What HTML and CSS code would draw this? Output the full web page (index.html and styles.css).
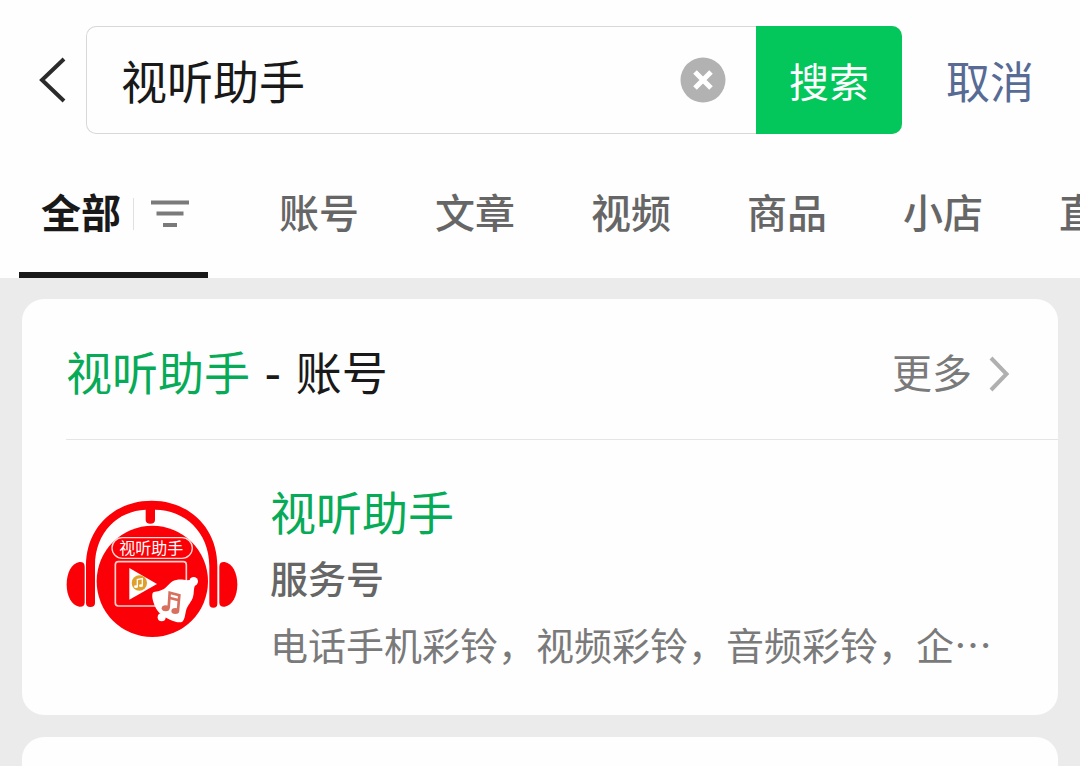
FILE: index.html
```html
<!DOCTYPE html>
<html lang="zh-CN">
<head>
    <meta charset="UTF-8">
    <meta name="viewport" content="width=device-width, initial-scale=1.0">
    <title>视听助手</title>
    <link rel="stylesheet" href="styles.css">
</head>
<body>

<header class="top">
    <form class="search">
        <button type="button" class="back" aria-label="返回">
            <svg width="28" height="46" viewBox="0 0 28 46"><path d="M26 2 L4 23 L26 44" fill="none" stroke="#2b2b2b" stroke-width="4"/></svg>
        </button>
        <div class="search-box">
            <input type="text" class="search-input" aria-label="搜索" value="视听助手">
            <button type="reset" class="clear" aria-label="清除">
                <svg width="46" height="46" viewBox="0 0 46 46"><circle cx="23" cy="23" r="22.5" fill="#b2b2b2"/><path d="M15 15 L31 31 M31 15 L15 31" stroke="#fff" stroke-width="5"/></svg>
            </button>
            <button type="submit" class="search-btn">搜索</button>
        </div>
        <button type="button" class="cancel">取消</button>
    </form>

    <nav class="tabs">
        <a href="#" class="tab active">
            <span>全部</span>
            <span class="divider"></span>
            <svg width="38" height="28" viewBox="0 0 38 28"><path d="M0 2.500 H38 M5.500 13.500 H32.500 M12 25 H26" stroke="#7a7a7a" stroke-width="4"/></svg>
        </a>
        <a href="#" class="tab">账号</a>
        <a href="#" class="tab">文章</a>
        <a href="#" class="tab">视频</a>
        <a href="#" class="tab">商品</a>
        <a href="#" class="tab">小店</a>
        <a href="#" class="tab">直播</a>
    </nav>
</header>

<main class="results">
    <section class="card">
        <div class="card-head">
            <h2 class="card-title"><em>视听助手</em> - 账号</h2>
            <a href="#" class="more">更多
                <svg width="22" height="36" viewBox="0 0 22 36"><path d="M3 2 L18.500 18 L3 34" fill="none" stroke="#b0b0b0" stroke-width="4"/></svg>
            </a>
        </div>
        <div class="account">
            <!-- headphones logo -->
            <svg class="avatar" viewBox="48 -18 516 516">
                <g fill="#fb0007">
                    <path d="M104 230 C104 219 98 215 88 216 C64 220 50 250 50 283 C50 318 64 346 88 350 C98 351 104 347 104 338 Z"/>
                    <path d="M508 230 C508 219 514 215 524 216 C548 220 562 250 562 283 C562 318 548 346 524 350 C514 351 508 347 508 338 Z"/>
                    <path d="M108 340 V228 C108 112 194 32 305 32 C416 32 502 112 502 228 V342 Q502 353 490 353 Q478 353 478 342 V228 C478 125 403 59 315 59 V90 Q315 101 301 101 Q287 101 287 90 V59 C205 62 135 125 135 228 V340 Q135 351 121 351 Q108 351 108 340 Z"/>
                    <circle cx="307" cy="274" r="167"/>
                </g>
                <rect x="186" y="143" width="241" height="62" rx="31" fill="#fb0007" stroke="#ffd9d4" stroke-width="4"/>
                <text x="304" y="192" class="avatar-text" text-anchor="middle">视听助手</text>
                <rect x="196" y="215" width="213" height="133" rx="9" fill="none" stroke="#ffd0cc" stroke-width="5"/>
                <path d="M238 234 L321 282 L238 329 Z" fill="#fff"/>
                <circle cx="268" cy="279" r="23" fill="#e0a02c"/>
                <path d="M262 289 V269 L277 266 V286" fill="none" stroke="#fff" stroke-width="4"/>
                <ellipse cx="258" cy="290" rx="6" ry="4" fill="#fff"/>
                <ellipse cx="273" cy="287" rx="6" ry="4" fill="#fff"/>
                <circle cx="335" cy="382" r="12" fill="#fff"/>
                <circle cx="431" cy="274" r="13" fill="#fff"/>
                <path d="M308 309 C310 304 326 306 340 298 C354 289 362 271 382 269 C396 267 408 272 420 270 L436 286 C430 294 433 308 429 321 C425 336 412 346 408 362 C405 376 404 388 397 395 C388 400 372 394 360 389 C340 381 322 367 315 349 C310 336 304 320 308 309 Z" fill="#fff"/>
                <g fill="none" stroke="#d9705f" stroke-width="8">
                    <path d="M356 354 L359 308 L388 316 L384 361"/>
                    <path d="M357 323 L387 331"/>
                </g>
                <ellipse cx="347" cy="355" rx="12" ry="9" fill="#d9705f"/>
                <ellipse cx="376" cy="363" rx="12" ry="9" fill="#d9705f"/>
            </svg>
            <div class="info">
                <h3 class="name">视听助手</h3>
                <p class="type">服务号</p>
                <p class="desc">电话手机彩铃，视频彩铃，音频彩铃，企…</p>
            </div>
        </div>
    </section>
    <section class="card next"></section>
</main>

</body>
</html>
```
FILE: styles.css
```css
* {
    box-sizing: border-box;
}
body {
    margin: 0;
    height: 100vh;
    display: flex;
    flex-direction: column;
    background-color: #ebebeb;
    color: #191919;
    font-family: "Liberation Sans", "Noto Sans CJK SC", sans-serif;
    overflow-x: hidden;
}
button {
    border: 0;
    padding: 0;
    background: none;
    font-family: inherit;
}
a {
    color: inherit;
    text-decoration: none;
}
h2, h3, p {
    margin: 0;
    font-weight: 400;
}
svg {
    display: block;
    flex: none;
}

/* Search bar */
.top {
    background-color: #fefefe;
    padding-top: 26px;
}
.search {
    display: flex;
    align-items: center;
    padding: 0 46px 0 38px;
}
.back {
    width: 48px;
}
.search-box {
    flex: 1;
    min-width: 0;
    height: 108px;
    display: flex;
    align-items: center;
    border: 1px solid #d8d8d8;
    border-right: 0;
    border-radius: 10px;
}
.search-input {
    flex: 1;
    min-width: 0;
    border: 0;
    outline: 0;
    padding: 0 0 2px 34px;
    background: none;
    color: #191919;
    font-family: inherit;
    font-size: 46px;
}
.clear {
    margin-right: 30px;
}
.search-btn {
    width: 146px;
    height: 108px;
    border-radius: 0 10px 10px 0;
    background-color: #04c75b;
    color: #fff;
    font-size: 40px;
}
.cancel {
    margin-left: 44px;
    color: #576b95;
    font-size: 44px;
}

/* Tabs */
.tabs {
    display: flex;
    gap: 76px;
    height: 144px;
    padding-left: 19px;
    overflow: hidden;
    color: #666;
    font-size: 40px;
    font-weight: 500;
    line-height: 60px;
    white-space: nowrap;
}
.tab {
    padding-top: 50px;
}
.active {
    display: flex;
    align-items: flex-start;
    padding-left: 22px;
    padding-right: 19px;
    margin-right: -5px;
    border-bottom: 6px solid #191919;
    color: #191919;
    font-weight: 700;
}
.divider {
    width: 1px;
    height: 32px;
    margin: 14px 17px 0 12px;
    background-color: #e0e0e0;
}
.active svg {
    margin-top: 16px;
}

/* Result cards */
.results {
    flex: 1;
    min-height: 0;
    padding: 21px 22px 0;
    display: flex;
    flex-direction: column;
    gap: 22px;
}
.card {
    background-color: #fefefe;
    border-radius: 22px;
    padding-left: 44px;
}
.card-head {
    display: flex;
    justify-content: space-between;
    align-items: center;
    height: 141px;
    padding: 10px 48px 0 0;
    border-bottom: 1px solid #e5e5e5;
}
.card-title {
    font-family: "DejaVu Sans", "Noto Sans CJK SC", sans-serif;
    font-size: 46px;
    line-height: 60px;
}
.card-title em {
    color: #07ab57;
    font-style: normal;
}
.more {
    display: flex;
    align-items: center;
    gap: 16px;
    color: #7a7a7a;
    font-size: 40px;
    line-height: 60px;
}
.account {
    display: flex;
    gap: 32px;
    padding: 44px 44px 43px 0;
}
.avatar {
    width: 172px;
    height: 172px;
}
.avatar-text {
    fill: #fff;
    font-size: 48px;
}
.info {
    flex: 1;
    min-width: 0;
    display: flex;
    flex-direction: column;
    gap: 8px;
}
.name {
    color: #07ab57;
    font-size: 46px;
    line-height: 60px;
}
.type {
    color: #666;
    font-size: 38px;
    font-weight: 500;
    line-height: 56px;
}
.desc {
    color: #7a7a7a;
    font-family: "Noto Sans CJK SC", sans-serif;
    font-size: 38px;
    line-height: 56px;
    white-space: nowrap;
    overflow: hidden;
    text-overflow: ellipsis;
}
/* the next result starts at the bottom edge of the screen */
.next {
    flex: 1;
    border-radius: 22px 22px 0 0;
}
```
